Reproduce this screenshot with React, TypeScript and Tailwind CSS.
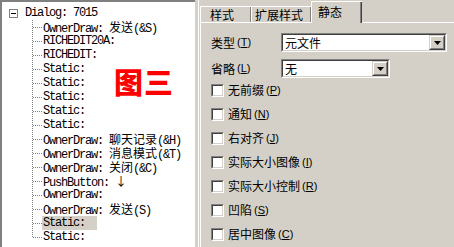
import React from 'react';

const treeItems = [
  'OwnerDraw: 发送(&S)',
  'RICHEDIT20A:',
  'RICHEDIT:',
  'Static:',
  'Static:',
  'Static:',
  'Static:',
  'Static:',
  'OwnerDraw: 聊天记录(&H)',
  'OwnerDraw: 消息模式(&T)',
  'OwnerDraw: 关闭(&C)',
  'PushButton: ↓',
  'OwnerDraw:',
  'OwnerDraw: 发送(S)',
  'Static:',
  'Static:',
];

const checks = [
  ['无前缀', 'P'],
  ['通知', 'N'],
  ['右对齐', 'J'],
  ['实际大小图像', 'I'],
  ['实际大小控制', 'R'],
  ['凹陷', 'S'],
  ['居中图像', 'C'],
];

// latin runs get the narrow mono spacing, CJK runs keep full width
const MixedText = ({ text }: { text: string }) => (
  <>
    {text.split(/([^\x00-\x7f]+)/).map((part, i) =>
      /[^\x00-\x7f]/.test(part) ? (
        <span key={i} className="tracking-normal font-['Noto_Sans_CJK_SC',sans-serif]">
          {part}
        </span>
      ) : (
        <span key={i}>{part}</span>
      )
    )}
  </>
);

const Connector = ({ last }: { last: boolean }) => (
  <svg width="10" height="14" className="shrink-0">
    <line x1="0.5" y1="0" x2="0.5" y2={last ? 7 : 14} stroke="#808080" strokeDasharray="1 1" />
    <line x1="1" y1="7.5" x2="10" y2="7.5" stroke="#808080" strokeDasharray="1 1" />
  </svg>
);

const Sunken = ({ className, children }: { className: string; children?: React.ReactNode }) => (
  <div className={`${className} border border-t-[#808080] border-l-[#808080] border-b-white border-r-white`}>
    <div className="h-full border border-t-[#404040] border-l-[#404040] border-b-[#d4d0c8] border-r-[#d4d0c8] bg-white flex items-center">
      {children}
    </div>
  </div>
);

const DropButton = () => (
  <div className="w-[16px] h-full border border-t-[#d4d0c8] border-l-[#d4d0c8] border-b-[#404040] border-r-[#404040] bg-[#d4d0c8]">
    <div className="h-full border border-t-white border-l-white border-b-[#808080] border-r-[#808080] flex items-center justify-center">
      <svg width="7" height="4">
        <path d="M0 0h7L3.5 4z" fill="#000" />
      </svg>
    </div>
  </div>
);

const Combo = ({ className, text }: { className: string; text: string }) => (
  <Sunken className={className}>
    <span className="flex-1 pl-[2px] text-[12px] leading-none text-black">{text}</span>
    <DropButton />
  </Sunken>
);

const Hotkey = ({ k }: { k: string }) => (
  <span className="font-['Liberation_Sans',sans-serif] text-[11px] ml-[2px]">
    (<span className="underline">{k}</span>)
  </span>
);

export default function App() {
  return (
    <div className="w-[454px] h-[247px] flex bg-[#d4d0c8] overflow-hidden font-['Noto_Sans_CJK_SC',sans-serif] text-black">
      {/* tree */}
      <div className="relative w-[195px] h-full bg-white border-t-2 border-l-2 border-[#808080] pt-[4px] pl-[7px] font-['Liberation_Mono','Noto_Sans_CJK_SC',monospace] text-[12px] tracking-[-1.2px] leading-none">
        <div className="h-[14px] flex items-center">
          <div className="w-[9px] h-[9px] border border-[#808080] bg-white flex items-center justify-center">
            <div className="w-[5px] h-px bg-black" />
          </div>
          <span className="ml-[7px] whitespace-pre">Dialog: 7015</span>
        </div>
        <div className="ml-[23px] flex flex-col">
          {treeItems.map((t, i) => (
            <div key={i} className="h-[14px] flex items-center">
              <Connector last={i === treeItems.length - 1} />
              <div className={`pl-[1px] h-[14px] leading-[14px] whitespace-pre ${i === 14 ? 'bg-[#d4d0c8] w-[55px]' : ''}`}>
                <MixedText text={t} />
              </div>
            </div>
          ))}
        </div>
        <div className="absolute left-[112px] top-[65px] text-[29px] font-black text-[#ff0000] tracking-[1px] leading-none font-['Noto_Sans_CJK_SC',sans-serif]">
          图三
        </div>
      </div>

      {/* splitter */}
      <div className="w-[5px] h-full flex">
        <div className="ml-[3px] w-px bg-white" />
      </div>

      {/* tab control */}
      <div className="flex-1 flex flex-col">
        <div className="h-[22px] flex items-end text-[12px] leading-none">
          <div className="w-[51px] h-[16px] border-t border-l border-white flex">
            <div className="flex-1 flex items-center pl-[9px]">样式</div>
            <div className="w-px bg-[#808080]" />
          </div>
          <div className="w-[60px] h-[16px] border-t border-l border-white flex">
            <div className="flex-1 flex items-center pl-[3px]">扩展样式</div>
            <div className="w-px bg-[#808080]" />
          </div>
          <div className="relative z-10 w-[51px] h-[22px] mb-[-1px] bg-[#d4d0c8] border-t border-l border-white flex">
            <div className="flex-1 flex items-center pl-[6px] pb-[2px]">静态</div>
            <div className="w-px bg-[#808080]" />
            <div className="w-px bg-[#404040]" />
          </div>
        </div>
        <div className="flex-1 border-t border-l border-white pl-[10px] pt-[10px] text-[12px] leading-none">
          <div className="h-[19px] flex items-center">
            <div className="w-[70px] flex items-center">
              类型<Hotkey k="T" />
            </div>
            <Combo className="w-[166px] h-[19px]" text="元文件" />
          </div>
          <div className="h-[19px] mt-[7px] flex items-center">
            <div className="w-[70px] flex items-center">
              省略<Hotkey k="L" />
            </div>
            <Combo className="w-[109px] h-[19px]" text="无" />
          </div>
          <div className="flex flex-col">
            {checks.map(([label, k]) => (
              <div key={label} className="h-[24px] flex items-center">
                <Sunken className="w-[13px] h-[13px]" />
                <span className="ml-[4px] flex items-center">
                  {label}
                  <Hotkey k={k} />
                </span>
              </div>
            ))}
          </div>
        </div>
      </div>
    </div>
  );
}
